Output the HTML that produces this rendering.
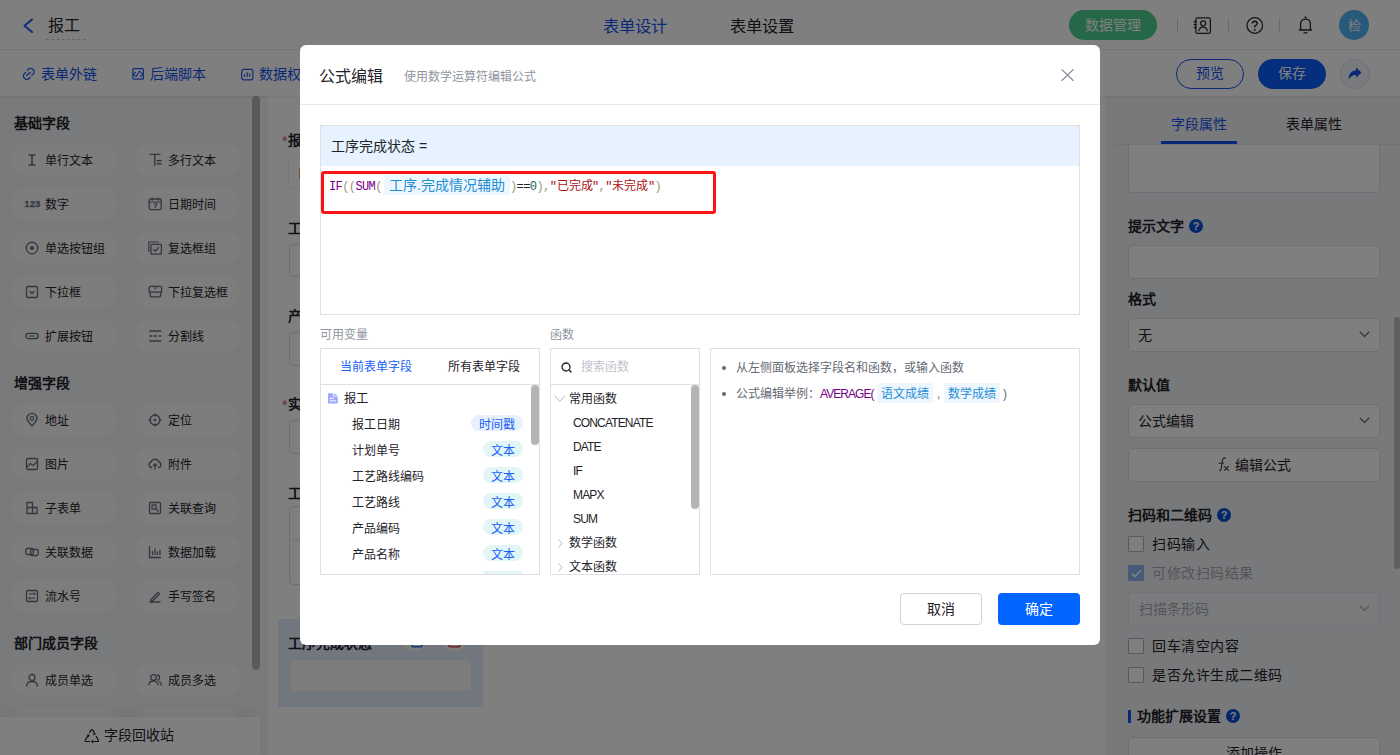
<!DOCTYPE html>
<html lang="zh-CN">
<head>
<meta charset="utf-8">
<style>
*{box-sizing:border-box;margin:0;padding:0}
html,body{width:1400px;height:755px;overflow:hidden;background:#fff;font-family:"Liberation Sans",sans-serif;color:#1f2329}
.t{position:absolute;white-space:nowrap;line-height:1}
.a{position:absolute}
svg{position:absolute;overflow:visible}
#top{position:absolute;left:0;top:0;width:1400px;height:50px;background:#fff;border-bottom:1px solid #e5e6eb}
#bar{position:absolute;left:0;top:51px;width:1400px;height:45px;background:#fff}
#left{position:absolute;left:0;top:96px;width:268px;height:659px;background:#f3f4f6}
#canvas{position:absolute;left:268px;top:96px;width:838px;height:659px;background:#fff}
#right{position:absolute;left:1106px;top:96px;width:294px;height:659px;background:#f1f2f4;box-shadow:-2px 0 4px rgba(0,0,0,.035)}
#overlay{position:absolute;left:0;top:0;width:1400px;height:755px;background:rgba(0,0,0,.5)}
#modal{position:absolute;left:300px;top:45px;width:800px;height:600px;background:#fff;border-radius:6px}
.pill{position:absolute;width:105px;height:34px;border-radius:17px;background:#fbfbfc}
.pill span{position:absolute;left:33px;top:11.5px;font-size:12px;line-height:1;white-space:nowrap;color:#1f2329}
.pill svg{left:13px;top:10px;width:14px;height:14px}
.sec{position:absolute;left:14px;font-size:14px;font-weight:bold;line-height:1;color:#1f2329}
.inp{position:absolute;left:1128px;width:252px;height:34px;border:1px solid #dcdfe6;border-radius:4px;background:#fff}
.lbl{position:absolute;left:1128px;font-size:14px;font-weight:bold;line-height:1;color:#1f2329}
.cb{position:absolute;left:1128px;width:16px;height:16px;border:1px solid #b4b7c0;border-radius:1px;background:#fff}
.q{position:absolute;width:14px;height:14px;border-radius:50%;background:#0b4fd8;color:#fff;font-size:11px;font-weight:bold;line-height:14px;text-align:center}
</style>
</head>
<body>
<!-- TOP BAR -->
<div id="top"></div>
<svg style="left:22px;top:17px" width="12" height="17"><path d="M10 2.5 L2.5 8.8 L10 15" fill="none" stroke="#1e5af0" stroke-width="2.1" stroke-linecap="round" stroke-linejoin="round"/></svg>
<div class="t" style="left:48px;top:18px;font-size:16px;color:#1f2329">报工</div>
<div class="a" style="left:46px;top:39px;width:40px;height:0;border-top:1px dashed #c9cdd4"></div>
<div class="t" style="left:603px;top:18px;font-size:16.3px;color:#1550f0">表单设计</div>
<div class="t" style="left:730px;top:18px;font-size:16.3px;color:#1f2329">表单设置</div>
<div class="a" style="left:1069px;top:10px;width:88px;height:30px;border-radius:15px;background:#4dcf90"></div>
<div class="t" style="left:1085px;top:18px;font-size:14px;color:#fff">数据管理</div>
<div class="a" style="left:1177px;top:18px;width:1px;height:14px;background:#d5d7dc"></div>
<div class="a" style="left:1228px;top:18px;width:1px;height:14px;background:#d5d7dc"></div>
<div class="a" style="left:1279px;top:18px;width:1px;height:14px;background:#d5d7dc"></div>
<svg style="left:1193px;top:17px" width="18" height="17"><rect x="2.8" y="0.8" width="14.6" height="15.6" rx="1.6" fill="none" stroke="#2e2a26" stroke-width="1.25"/><circle cx="10.1" cy="6.3" r="2.5" fill="none" stroke="#2e2a26" stroke-width="1.25"/><path d="M5.8 14.2 Q6.2 10 10.1 10 Q14 10 14.4 14.2" fill="none" stroke="#2e2a26" stroke-width="1.25"/><path d="M0.6 4.6h3.2M0.6 7.6h3.2M0.6 10.6h3.2" stroke="#2e2a26" stroke-width="1.1"/></svg>
<svg style="left:1246px;top:17px" width="18" height="17"><circle cx="8.8" cy="8.5" r="7.8" fill="none" stroke="#2e2a26" stroke-width="1.25"/><path d="M6.4 6.6 Q6.4 4.2 8.8 4.2 Q11.2 4.2 11.2 6.4 Q11.2 7.9 8.8 8.9 V10.5" fill="none" stroke="#2e2a26" stroke-width="1.4"/><circle cx="8.8" cy="12.9" r="0.95" fill="#2e2a26"/></svg>
<svg style="left:1298px;top:16px" width="15" height="18"><circle cx="7.5" cy="1.3" r="1" fill="#2e2a26"/><path d="M2.6 13.6 V8.2 Q2.6 3.1 7.5 3.1 Q12.4 3.1 12.4 8.2 V13.6 M0.8 14 H14.2" fill="none" stroke="#2e2a26" stroke-width="1.3"/><path d="M5.6 16.8h3.8" stroke="#2e2a26" stroke-width="1.3"/></svg>
<div class="a" style="left:1339px;top:10px;width:30px;height:30px;border-radius:50%;background:#50b2f2"></div>
<div class="t" style="left:1348px;top:19px;font-size:13px;color:#fff">检</div>

<!-- TOOLBAR -->
<div id="bar"></div>
<svg style="left:22px;top:68px" width="13" height="13"><path d="M5.38 2.53 A3.5 3.5 0 1 1 9.85 7.17 M8.12 9.22 A3.5 3.5 0 1 1 3.65 4.58 M4.6 7.6 L8.5 4.3" fill="none" stroke="#1e5af0" stroke-width="1.25" stroke-linecap="round"/></svg>
<div class="t" style="left:41px;top:67px;font-size:14px;color:#1550f0">表单外链</div>
<svg style="left:132px;top:68px" width="13" height="13"><rect x="0.9" y="0.6" width="10.5" height="10.6" rx="1" fill="none" stroke="#1e5af0" stroke-width="1.2"/><path d="M3.5 4.3 L1.2 6.4 L4.3 8.5 L7.3 3.2 L10.9 6.2 L8.6 8.5" fill="none" stroke="#1e5af0" stroke-width="1.1" stroke-linejoin="round" stroke-linecap="round"/></svg>
<div class="t" style="left:150px;top:67px;font-size:14px;color:#1550f0">后端脚本</div>
<svg style="left:241px;top:68px" width="13" height="13"><rect x="0.7" y="1.4" width="11.2" height="10.4" rx="2" fill="none" stroke="#1e5af0" stroke-width="1.2"/><path d="M3.5 6.2v2.6M6.2 4.2v4.6M8.6 5.4v3.4" stroke="#1e5af0" stroke-width="1.2"/></svg>
<div class="t" style="left:259px;top:67px;font-size:14px;color:#1550f0">数据权限</div>
<div class="a" style="left:1176px;top:59px;width:68px;height:30px;border-radius:15px;border:1px solid #1550f0;background:#fff"></div>
<div class="t" style="left:1196px;top:66px;font-size:14px;color:#1550f0">预览</div>
<div class="a" style="left:1258px;top:59px;width:68px;height:30px;border-radius:15px;background:#0a5cff"></div>
<div class="t" style="left:1278px;top:66px;font-size:14px;color:#fff">保存</div>
<div class="a" style="left:1340px;top:59px;width:30px;height:30px;border-radius:50%;border:1px solid #dde3f0;background:#f5f7fc"></div>
<svg style="left:1347px;top:66px" width="16" height="16"><path d="M14.5 6.5 L9 1.5 V4.3 Q2 4.8 1.5 13.5 Q4.5 8.8 9 9 V11.8 Z" fill="#1550f0"/></svg>

<!-- LEFT PANEL -->
<div id="left"></div>
<div class="sec" style="top:116px">基础字段</div>
<div class="pill" style="left:12px;top:143px"><svg viewBox="0 0 14 14"><path d="M3.5 2h7M3.5 12h7M7 2v10" stroke="#646c7e" stroke-width="1.5" fill="none"/></svg><span>单行文本</span></div>
<div class="pill" style="left:135px;top:143px"><svg viewBox="0 0 14 14"><path d="M1.5 1.4h11M6.8 1.4v11.4M8.7 7.7h4.9M8.7 10.7h4.9" stroke="#646c7e" stroke-width="1.4" fill="none"/></svg><span>多行文本</span></div>
<div class="pill" style="left:12px;top:187px"><svg viewBox="0 0 18 14" style="left:12px;top:9px;width:18px;height:14px"><text x="0.3" y="10.9" font-size="9.6" font-weight="bold" fill="#6e7890" stroke="#6e7890" stroke-width="0.3" font-family="Liberation Sans">123</text></svg><span>数字</span></div>
<div class="pill" style="left:135px;top:187px"><svg viewBox="0 0 14 14"><rect x="1.2" y="2" width="12" height="10.6" rx="1.6" stroke="#646c7e" stroke-width="1.3" fill="none"/><path d="M4.2 0.6v2.8M10.4 0.6v2.8M1.2 5h12M5.8 7h3L6.8 11" stroke="#646c7e" stroke-width="1.2" fill="none"/></svg><span>日期时间</span></div>
<div class="pill" style="left:12px;top:231px"><svg viewBox="0 0 14 14"><circle cx="7" cy="7" r="5.8" stroke="#646c7e" stroke-width="1.3" fill="none"/><circle cx="7" cy="7" r="2" fill="#646c7e"/></svg><span>单选按钮组</span></div>
<div class="pill" style="left:135px;top:231px"><svg viewBox="0 0 14 14"><path d="M0.8 11V1h10" stroke="#646c7e" stroke-width="1.2" fill="none"/><rect x="3" y="3.4" width="10.4" height="9.8" rx="0.8" stroke="#646c7e" stroke-width="1.3" fill="none"/><path d="M5.4 8.2l1.9 1.9 3.6-4" stroke="#646c7e" stroke-width="1.3" fill="none"/></svg><span>复选框组</span></div>
<div class="pill" style="left:12px;top:275px"><svg viewBox="0 0 14 14"><rect x="1.5" y="1.5" width="11" height="11" rx="1" stroke="#646c7e" stroke-width="1.3" fill="none"/><path d="M4.5 6l2.5 2.5L9.5 6" stroke="#646c7e" stroke-width="1.3" fill="none"/></svg><span>下拉框</span></div>
<div class="pill" style="left:135px;top:275px"><svg viewBox="0 0 14 14"><path d="M2.2 1.4h10.4q1 0 1 1v4.8H1.2V2.4q0-1 1-1zM2.2 7.2v3.6q0 1 1 1h8.4q1 0 1-1V7.2" stroke="#646c7e" stroke-width="1.3" fill="none"/><path d="M5.6 2.4h3.6L7.4 4.6z" fill="#646c7e"/></svg><span>下拉复选框</span></div>
<div class="pill" style="left:12px;top:319px"><svg viewBox="0 0 14 14"><rect x="0.8" y="4.3" width="12.4" height="5.4" rx="2.7" stroke="#646c7e" stroke-width="1.3" fill="none"/><path d="M4 7h6" stroke="#646c7e" stroke-width="1.2"/></svg><span>扩展按钮</span></div>
<div class="pill" style="left:135px;top:319px"><svg viewBox="0 0 14 14"><path d="M1.4 2h12M1.4 7h3M5.9 7h3M10.4 7h3M1.4 12h12" stroke="#646c7e" stroke-width="1.3" fill="none"/></svg><span>分割线</span></div>

<div class="sec" style="top:376px">增强字段</div>
<div class="pill" style="left:12px;top:403px"><svg viewBox="0 0 14 14"><path d="M7 13C3.5 9.5 2 7.5 2 5.3A5 5 0 0 1 12 5.3C12 7.5 10.5 9.5 7 13Z" stroke="#646c7e" stroke-width="1.3" fill="none"/><circle cx="7" cy="5.5" r="1.8" stroke="#646c7e" stroke-width="1.2" fill="none"/></svg><span>地址</span></div>
<div class="pill" style="left:135px;top:403px"><svg viewBox="0 0 14 14"><circle cx="7" cy="7" r="5" stroke="#646c7e" stroke-width="1.3" fill="none"/><circle cx="7" cy="7" r="1.3" fill="#646c7e"/><path d="M7 0.5v3M7 10.5v3M0.5 7h3M10.5 7h3" stroke="#646c7e" stroke-width="1.2"/></svg><span>定位</span></div>
<div class="pill" style="left:12px;top:447px"><svg viewBox="0 0 14 14"><rect x="1.5" y="1.5" width="11" height="11" rx="1.5" stroke="#646c7e" stroke-width="1.3" fill="none"/><path d="M2 10l3.5-3.5 2.5 2 4.5-4" stroke="#646c7e" stroke-width="1.2" fill="none"/></svg><span>图片</span></div>
<div class="pill" style="left:135px;top:447px"><svg viewBox="0 0 14 14"><path d="M4 10.5H3.5A2.8 2.8 0 0 1 3.2 5a4 4 0 0 1 7.6 0A2.8 2.8 0 0 1 10.5 10.5H10M7 12.5V7M5 9l2-2 2 2" stroke="#646c7e" stroke-width="1.3" fill="none"/></svg><span>附件</span></div>
<div class="pill" style="left:12px;top:491px"><svg viewBox="0 0 14 14"><path d="M2 1.5h5.5v11H2zM7.5 6.5H12v6H7.5M2 6.5h5.5" stroke="#646c7e" stroke-width="1.3" fill="none"/></svg><span>子表单</span></div>
<div class="pill" style="left:135px;top:491px"><svg viewBox="0 0 14 14"><rect x="1.5" y="1.5" width="11" height="11" rx="1" stroke="#646c7e" stroke-width="1.3" fill="none"/><rect x="4" y="4" width="4" height="4" stroke="#646c7e" stroke-width="1.2" fill="none"/><path d="M7.5 7.5l3 3" stroke="#646c7e" stroke-width="1.3"/></svg><span>关联查询</span></div>
<div class="pill" style="left:12px;top:535px"><svg viewBox="0 0 14 14"><rect x="0.8" y="3.5" width="7.5" height="6" rx="1.5" stroke="#646c7e" stroke-width="1.3" fill="none"/><rect x="5.7" y="4.5" width="7.5" height="6" rx="1.5" stroke="#646c7e" stroke-width="1.3" fill="none"/></svg><span>关联数据</span></div>
<div class="pill" style="left:135px;top:535px"><svg viewBox="0 0 14 14"><path d="M1.5 1v11.5H13M4.5 10V6M7 10V3.5M9.5 10V6.5M12 10V5" stroke="#646c7e" stroke-width="1.3" fill="none"/></svg><span>数据加载</span></div>
<div class="pill" style="left:12px;top:579px"><svg viewBox="0 0 14 14"><rect x="1.5" y="1.5" width="11" height="11" rx="1" stroke="#646c7e" stroke-width="1.3" fill="none"/><path d="M4 5h6l-1.5-1.3M10 9H4l1.5 1.3" stroke="#646c7e" stroke-width="1.2" fill="none"/></svg><span>流水号</span></div>
<div class="pill" style="left:135px;top:579px"><svg viewBox="0 0 14 14"><path d="M3 10.5L10 3.5l1.5 1.5-7 7H3z M1.5 13h11" stroke="#646c7e" stroke-width="1.3" fill="none"/></svg><span>手写签名</span></div>

<div class="sec" style="top:636px">部门成员字段</div>
<div class="pill" style="left:12px;top:663px"><svg viewBox="0 0 14 14"><circle cx="7" cy="4.5" r="3" stroke="#646c7e" stroke-width="1.3" fill="none"/><path d="M1.5 13.5C1.5 10 4 8.5 7 8.5S12.5 10 12.5 13.5" stroke="#646c7e" stroke-width="1.3" fill="none"/></svg><span>成员单选</span></div>
<div class="pill" style="left:135px;top:663px"><svg viewBox="0 0 14 14"><circle cx="5.5" cy="4.5" r="2.8" stroke="#646c7e" stroke-width="1.3" fill="none"/><path d="M0.8 12.5C0.8 9.5 2.8 8 5.5 8S10.2 9.5 10.2 12.5M9 2a2.6 2.6 0 0 1 0 5.2M11 8.5c1.5.6 2.3 1.9 2.3 4" stroke="#646c7e" stroke-width="1.3" fill="none"/></svg><span>成员多选</span></div>
<div class="pill" style="left:12px;top:707px"></div>
<div class="pill" style="left:135px;top:707px"></div>
<div class="a" style="left:252px;top:96px;width:8px;height:574px;border-radius:4px;background:#b4b4b4"></div>
<div class="a" style="left:0;top:717px;width:260px;height:38px;background:#fff;box-shadow:0 -4px 10px rgba(0,0,0,.06)"></div>
<svg style="left:83px;top:728px" width="17" height="16"><path d="M5 7.6 L2.3 12.2 Q1.8 13.5 3.2 13.5 H7.2 M10.6 13.5 H14.6 Q16 13.5 15.4 12.2 L13 8 M6.4 4.8 L8 2.2 Q8.9 1 9.8 2.2 L11.4 4.9" fill="none" stroke="#1f2329" stroke-width="1.2"/><path d="M3.9 6.4 L6.9 6.6 L5.6 9.4Z M10.2 11.6 V15.4 L7.9 13.5Z M10.6 4.6 L13.2 5.9 L10.4 7.4Z" fill="#1f2329"/></svg>
<div class="t" style="left:104px;top:728px;font-size:14px;color:#1f2329">字段回收站</div>

<!-- CANVAS -->
<div id="canvas"></div>
<div class="t" style="left:282px;top:134px;font-size:14px;color:#e34d59">*</div>
<div class="t" style="left:288px;top:133px;font-size:14px;font-weight:bold">报工日期</div>
<div class="a" style="left:288px;top:156px;width:300px;height:33px;border:1px solid #edeef1;border-radius:4px"></div>
<div class="a" style="left:299px;top:168px;width:1px;height:11px;background:#f0a050"></div>
<div class="t" style="left:288px;top:221px;font-size:14px;font-weight:bold">工序</div>
<div class="a" style="left:289px;top:244px;width:300px;height:33px;border:1px solid #dcdfe6;border-radius:4px"></div>
<div class="t" style="left:288px;top:309px;font-size:14px;font-weight:bold">产品</div>
<div class="a" style="left:289px;top:332px;width:300px;height:34px;border:1px solid #dcdfe6;border-radius:4px"></div>
<div class="t" style="left:282px;top:398px;font-size:14px;color:#e34d59">*</div>
<div class="t" style="left:288px;top:397px;font-size:14px;font-weight:bold">实际</div>
<div class="a" style="left:289px;top:420px;width:300px;height:34px;border:1px solid #dcdfe6;border-radius:4px"></div>
<div class="t" style="left:288px;top:486px;font-size:14px;font-weight:bold">工序</div>
<div class="a" style="left:289px;top:506px;width:300px;height:79px;border:1px solid #dcdfe6;border-radius:4px"></div>
<div class="a" style="left:289px;top:540px;width:300px;height:1px;background:#e4e6ea"></div>
<div class="a" style="left:278px;top:619px;width:205px;height:88px;background:#e4efff"></div>
<div class="t" style="left:288px;top:636px;font-size:14px;font-weight:bold">工序完成状态</div>
<div class="a" style="left:401px;top:626px;width:27px;height:27px;border-radius:50%;background:#fafbfc;border:1px solid #dfe6f2"></div>
<div class="a" style="left:441px;top:626px;width:27px;height:27px;border-radius:50%;background:#fafbfc;border:1px solid #dfe6f2"></div>
<svg style="left:411px;top:634px" width="12" height="14"><rect x="0.8" y="1" width="10.4" height="11.8" rx="2" fill="none" stroke="#2f6bf0" stroke-width="1.6"/></svg>
<svg style="left:448px;top:634px" width="13" height="14"><rect x="0.8" y="1" width="11.4" height="11.8" rx="2" fill="none" stroke="#e5484d" stroke-width="1.6"/></svg>
<div class="a" style="left:289px;top:659px;width:183px;height:33px;border:1px solid #e8eaee;border-radius:4px;background:#f8f9fb"></div>

<!-- RIGHT PANEL -->
<div id="right"></div>
<div class="inp" style="top:130px;height:63px"></div>
<div class="a" style="left:1106px;top:96px;width:294px;height:49px;background:#f1f2f4"></div>
<div class="t" style="left:1171px;top:117px;font-size:14px;color:#1550f0">字段属性</div>
<div class="t" style="left:1286px;top:117px;font-size:14px;color:#1f2329">表单属性</div>
<div class="a" style="left:1113px;top:144px;width:287px;height:1px;background:#e5e6eb"></div>
<div class="a" style="left:1161px;top:141px;width:76px;height:3px;background:#1550f0"></div>
<div class="lbl" style="top:219px">提示文字</div>
<div class="q" style="left:1189px;top:219px">?</div>
<div class="inp" style="top:245px"></div>
<div class="lbl" style="top:292px">格式</div>
<div class="inp" style="top:318px"></div>
<div class="t" style="left:1138px;top:328px;font-size:14px">无</div>
<svg style="left:1359px;top:331px" width="11" height="7"><path d="M0.8 0.8L5.5 5.5 10.2 0.8" stroke="#6b7078" stroke-width="1.3" fill="none"/></svg>
<div class="lbl" style="top:378px">默认值</div>
<div class="inp" style="top:404px"></div>
<div class="t" style="left:1138px;top:414px;font-size:14px">公式编辑</div>
<svg style="left:1359px;top:417px" width="11" height="7"><path d="M0.8 0.8L5.5 5.5 10.2 0.8" stroke="#6b7078" stroke-width="1.3" fill="none"/></svg>
<div class="inp" style="top:448px"></div>
<svg style="left:1218px;top:457px" width="12" height="15"><path d="M7.9 1.6 C6.4 0.2 4.9 0.9 4.5 3.4 L3.3 11.4 C3.1 13 2.4 13.7 1.4 13.6 M0.6 6.2 H5.8 M6.2 9.2 L10.8 13.6 M10.8 9.2 L6.2 13.6" fill="none" stroke="#3a3f47" stroke-width="1.05"/></svg>
<div class="t" style="left:1235px;top:458px;font-size:14px">编辑公式</div>
<div class="lbl" style="top:508px">扫码和二维码</div>
<div class="q" style="left:1217px;top:508px">?</div>
<div class="cb" style="top:536px"></div>
<div class="t" style="left:1152px;top:537px;font-size:14px;letter-spacing:0.5px">扫码输入</div>
<div class="cb" style="top:565px;background:#8fb4f5;border-color:#8fb4f5"></div>
<svg style="left:1131px;top:569px" width="11" height="9"><path d="M1 4.5l3 3L10 1" stroke="#fff" stroke-width="1.6" fill="none"/></svg>
<div class="t" style="left:1152px;top:566px;font-size:14px;letter-spacing:0.5px;color:#a8abb2">可修改扫码结果</div>
<div class="inp" style="top:592px;background:#f5f7fa;border-color:#e4e7ed"></div>
<div class="t" style="left:1139px;top:602px;font-size:14px;color:#a8abb2">扫描条形码</div>
<svg style="left:1359px;top:605px" width="11" height="7"><path d="M0.8 0.8L5.5 5.5 10.2 0.8" stroke="#b0b3b8" stroke-width="1.3" fill="none"/></svg>
<div class="cb" style="top:638px"></div>
<div class="t" style="left:1152px;top:639px;font-size:14px;letter-spacing:0.5px">回车清空内容</div>
<div class="cb" style="top:667px"></div>
<div class="t" style="left:1152px;top:668px;font-size:14px;letter-spacing:0.5px">是否允许生成二维码</div>
<div class="a" style="left:1128px;top:710px;width:3px;height:13px;background:#1550f0"></div>
<div class="lbl" style="left:1137px;top:709px">功能扩展设置</div>
<div class="q" style="left:1226px;top:709px">?</div>
<div class="inp" style="top:737px"></div>
<div class="t" style="left:1226px;top:746px;font-size:14px">添加操作</div>
<div class="a" style="left:1394px;top:317px;width:6px;height:252px;border-radius:3px;background:#bcbec2"></div>

<div class="a" style="left:0;top:96px;width:1400px;height:3px;background:linear-gradient(rgba(0,0,0,.05),rgba(0,0,0,0))"></div>
<div id="overlay"></div>

<!-- MODAL -->
<div id="modal"></div>
<div class="t" style="left:319px;top:69px;font-size:16px;color:#1f2329">公式编辑</div>
<div class="t" style="left:404px;top:71px;font-size:12px;color:#8f959e">使用数学运算符编辑公式</div>
<svg style="left:1061px;top:69px" width="13" height="12"><path d="M0.6 0.4L12.4 11.8M12.4 0.4L0.6 11.8" stroke="#858a93" stroke-width="1.2"/></svg>
<div class="a" style="left:300px;top:104px;width:800px;height:1px;background:#e8e9eb"></div>
<!-- formula box -->
<div class="a" style="left:320px;top:125px;width:760px;height:190px;border:1px solid #dee0e3"></div>
<div class="a" style="left:321px;top:126px;width:758px;height:40px;background:#e6f3fe"></div>
<div class="t" style="left:331px;top:139px;font-size:14px;color:#1f2329">工序完成状态 =</div>
<div class="a" style="left:321px;top:171px;width:395px;height:43px;border:3px solid #fd1313;border-radius:3px"></div>
<div class="a" style="left:384px;top:175px;width:126px;height:20px;background:#eef6fe;border-radius:2px"></div>
<div class="t" style="left:389px;top:178px;font-size:14px;color:#1f8fd6">工序.完成情况辅助</div>
<div class="t" style="left:329px;top:181px;font-size:12px;letter-spacing:-0.6px;font-family:'Liberation Mono',monospace"><span style="color:#708">IF</span><span style="color:#997">((</span><span style="color:#708">SUM</span><span style="color:#997">(</span></div>
<div class="t" style="left:510px;top:181px;font-size:12px;letter-spacing:-0.6px;font-family:'Liberation Mono',monospace"><span style="color:#997">)</span><span style="color:#222">==</span><span style="color:#164">0</span><span style="color:#997">),</span><span style="color:#a11">"</span></div>
<div class="t" style="left:557px;top:180px;font-size:12px;color:#a11">已完成</div>
<div class="t" style="left:592px;top:181px;font-size:12px;letter-spacing:-0.6px;font-family:'Liberation Mono',monospace"><span style="color:#a11">"</span><span style="color:#997">,</span><span style="color:#a11">"</span></div>
<div class="t" style="left:612px;top:180px;font-size:12px;color:#a11">未完成</div>
<div class="t" style="left:648px;top:181px;font-size:12px;letter-spacing:-0.6px;font-family:'Liberation Mono',monospace"><span style="color:#a11">"</span><span style="color:#997">)</span></div>
<!-- variables -->
<div class="t" style="left:320px;top:329px;font-size:12px;color:#8f959e">可用变量</div>
<div class="a" style="left:320px;top:348px;width:220px;height:227px;border:1px solid #dee0e3"></div>
<div class="a" style="left:321px;top:384px;width:218px;height:1px;background:#dee0e3"></div>
<div class="t" style="left:340px;top:361px;font-size:12px;color:#1660f5">当前表单字段</div>
<div class="t" style="left:448px;top:361px;font-size:12px;color:#1f2329">所有表单字段</div>
<svg style="left:328px;top:393px" width="10" height="11"><path d="M0 0.3H5.2V3.6H9.8V10.6H0Z" fill="#a0a9fb"/><path d="M6.2 0.3L9.8 2.8H6.2Z" fill="#a0a9fb"/><path d="M1.8 5.3h4.2M1.8 7.8h6.3" stroke="#fff" stroke-width="0.9"/></svg>
<div class="t" style="left:344px;top:393px;font-size:12.3px;color:#1f2329">报工</div>
<div class="t" style="left:352px;top:419px;font-size:12px;color:#1f2329">报工日期</div>
<div class="a" style="left:471px;top:415px;width:52px;height:16px;border-radius:8px;background:#e8f0fe"></div>
<div class="t" style="left:479px;top:419px;font-size:12px;color:#1660f5">时间戳</div>
<div class="t" style="left:352px;top:445px;font-size:12px;color:#1f2329">计划单号</div>
<div class="a" style="left:483px;top:441px;width:40px;height:16px;border-radius:8px;background:#e3f6f7"></div>
<div class="t" style="left:491px;top:445px;font-size:12px;color:#1660f5">文本</div>
<div class="t" style="left:352px;top:471px;font-size:12px;color:#1f2329">工艺路线编码</div>
<div class="a" style="left:483px;top:467px;width:40px;height:16px;border-radius:8px;background:#e3f6f7"></div>
<div class="t" style="left:491px;top:471px;font-size:12px;color:#1660f5">文本</div>
<div class="t" style="left:352px;top:497px;font-size:12px;color:#1f2329">工艺路线</div>
<div class="a" style="left:483px;top:493px;width:40px;height:16px;border-radius:8px;background:#e3f6f7"></div>
<div class="t" style="left:491px;top:497px;font-size:12px;color:#1660f5">文本</div>
<div class="t" style="left:352px;top:523px;font-size:12px;color:#1f2329">产品编码</div>
<div class="a" style="left:483px;top:519px;width:40px;height:16px;border-radius:8px;background:#e3f6f7"></div>
<div class="t" style="left:491px;top:523px;font-size:12px;color:#1660f5">文本</div>
<div class="t" style="left:352px;top:549px;font-size:12px;color:#1f2329">产品名称</div>
<div class="a" style="left:483px;top:545px;width:40px;height:16px;border-radius:8px;background:#e3f6f7"></div>
<div class="t" style="left:491px;top:549px;font-size:12px;color:#1660f5">文本</div>
<div class="a" style="left:483px;top:571px;width:40px;height:3px;border-radius:9px 9px 0 0;background:#e3f6f7"></div>
<div class="a" style="left:531px;top:385px;width:8px;height:60px;border-radius:4px;background:#b4b4b4"></div>
<!-- functions -->
<div class="t" style="left:550px;top:329px;font-size:12px;color:#8f959e">函数</div>
<div class="a" style="left:550px;top:348px;width:150px;height:227px;border:1px solid #dee0e3"></div>
<div class="a" style="left:551px;top:384px;width:148px;height:1px;background:#dee0e3"></div>
<svg style="left:561px;top:362px" width="12" height="11"><circle cx="5" cy="5" r="4" stroke="#1f2329" stroke-width="1.3" fill="none"/><path d="M7.8 7.8L10.5 10.5" stroke="#1f2329" stroke-width="1.3"/></svg>
<div class="t" style="left:581px;top:361px;font-size:12px;color:#c0c4cc">搜索函数</div>
<svg style="left:554px;top:395px" width="12" height="8"><path d="M0.5 0.5L5.75 6.5 11 0.5" stroke="#b6b9bf" stroke-width="1" fill="none"/></svg>
<div class="t" style="left:569px;top:393px;font-size:12px;color:#1f2329">常用函数</div>
<div class="t" style="left:573px;top:417px;font-size:12px;letter-spacing:-0.85px;color:#1f2329">CONCATENATE</div>
<div class="t" style="left:573px;top:441px;font-size:12px;letter-spacing:-0.85px;color:#1f2329">DATE</div>
<div class="t" style="left:573px;top:465px;font-size:12px;letter-spacing:-0.85px;color:#1f2329">IF</div>
<div class="t" style="left:573px;top:489px;font-size:12px;letter-spacing:-0.85px;color:#1f2329">MAPX</div>
<div class="t" style="left:573px;top:513px;font-size:12px;letter-spacing:-0.85px;color:#1f2329">SUM</div>
<svg style="left:558px;top:539px" width="5" height="9"><path d="M0.5 0.5L4 4.5 0.5 8.5" stroke="#b6b9bf" stroke-width="1" fill="none"/></svg>
<div class="t" style="left:569px;top:537px;font-size:12px;color:#1f2329">数学函数</div>
<svg style="left:558px;top:563px" width="5" height="9"><path d="M0.5 0.5L4 4.5 0.5 8.5" stroke="#b6b9bf" stroke-width="1" fill="none"/></svg>
<div class="t" style="left:569px;top:561px;font-size:12px;color:#1f2329">文本函数</div>
<div class="a" style="left:691px;top:385px;width:8px;height:124px;border-radius:4px;background:#b4b4b4"></div>
<!-- description -->
<div class="a" style="left:710px;top:348px;width:370px;height:227px;border:1px solid #dee0e3"></div>
<div class="a" style="left:722px;top:366px;width:4px;height:4px;border-radius:50%;background:#646a73"></div>
<div class="t" style="left:736px;top:362px;font-size:12px;color:#646a73">从左侧面板选择字段名和函数，或输入函数</div>
<div class="a" style="left:722px;top:392px;width:4px;height:4px;border-radius:50%;background:#646a73"></div>
<div class="t" style="left:736px;top:388px;font-size:12px;color:#646a73">公式编辑举例：</div>
<div class="t" style="left:820px;top:388px;font-size:12px;letter-spacing:-0.95px;color:#708">AVERAGE(</div>
<div class="a" style="left:877px;top:383px;width:56px;height:20px;border-radius:2px;background:#eef6fe"></div>
<div class="t" style="left:881px;top:388px;font-size:12px;color:#1f8fd6">语文成绩</div>
<div class="t" style="left:937px;top:388px;font-size:12px;color:#646a73">,</div>
<div class="a" style="left:944px;top:383px;width:56px;height:20px;border-radius:2px;background:#eef6fe"></div>
<div class="t" style="left:948px;top:388px;font-size:12px;color:#1f8fd6">数学成绩</div>
<div class="t" style="left:1003px;top:388px;font-size:12px;color:#646a73">)</div>
<!-- buttons -->
<div class="a" style="left:900px;top:593px;width:82px;height:32px;border:1px solid #d0d3d6;border-radius:4px;background:#fff"></div>
<div class="t" style="left:927px;top:602px;font-size:14px;color:#1f2329">取消</div>
<div class="a" style="left:998px;top:593px;width:82px;height:32px;border-radius:4px;background:#0265ff"></div>
<div class="t" style="left:1025px;top:602px;font-size:14px;color:#fff">确定</div>
</body>
</html>
